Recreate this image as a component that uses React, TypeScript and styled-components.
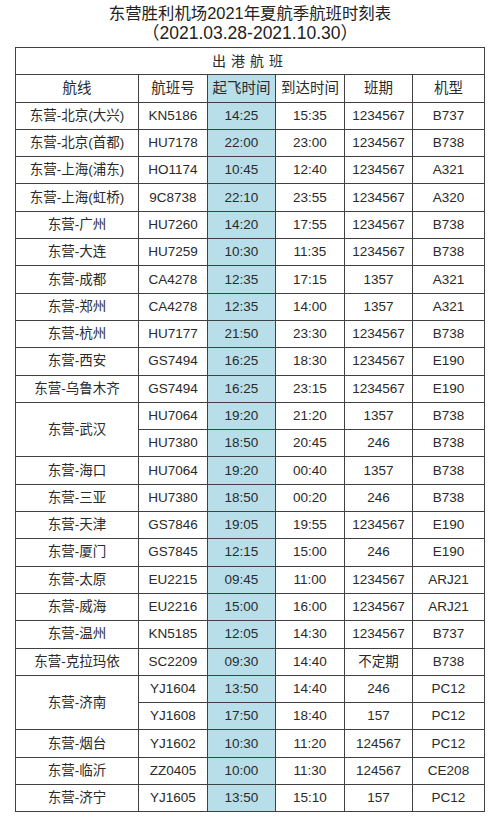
import React from 'react';
import styled, { createGlobalStyle } from 'styled-components';

const GlobalStyle = createGlobalStyle`
  html, body {
    margin: 0;
    padding: 0;
    background: #ffffff;
  }
  body {
    font-family: "Liberation Sans", "Noto Sans CJK SC", sans-serif;
    color: #2a2a2a;
  }
`;

const Page = styled.div`
  width: 500px;
  display: flex;
  flex-direction: column;
  align-items: center;
`;

const Heading = styled.div`
  height: 47px;
  padding-top: 3px;
  box-sizing: border-box;
  text-align: center;
  color: #222;
`;

const TitleLine = styled.div<{ size: number }>`
  font-size: ${p => p.size}px;
  line-height: 20px;
`;

const Table = styled.table`
  width: 469px;
  border-collapse: collapse;
  table-layout: fixed;
  border: 1.5px solid #404040;
`;

const Row = styled.tr`
  height: 27.3px;
`;

const Cell = styled.td<{ blue?: boolean }>`
  border: 1.3px solid #404040;
  padding: 0;
  text-align: center;
  vertical-align: middle;
  font-size: 13.5px;
  line-height: 16px;
  background: ${p => (p.blue ? '#b8dfe9' : '#ffffff')};
  white-space: nowrap;
`;

const Banner = styled(Cell)`
  letter-spacing: 5px;
  font-size: 14px;
`;

const HeadCell = styled(Cell)`
  font-size: 14.5px;
`;

type Flight = {
  route?: string;
  span?: number;
  no: string;
  dep: string;
  arr: string;
  days: string;
  type: string;
};

const flights: Flight[] = [
  { route: '东营-北京(大兴)', no: 'KN5186', dep: '14:25', arr: '15:35', days: '1234567', type: 'B737' },
  { route: '东营-北京(首都)', no: 'HU7178', dep: '22:00', arr: '23:00', days: '1234567', type: 'B738' },
  { route: '东营-上海(浦东)', no: 'HO1174', dep: '10:45', arr: '12:40', days: '1234567', type: 'A321' },
  { route: '东营-上海(虹桥)', no: '9C8738', dep: '22:10', arr: '23:55', days: '1234567', type: 'A320' },
  { route: '东营-广州', no: 'HU7260', dep: '14:20', arr: '17:55', days: '1234567', type: 'B738' },
  { route: '东营-大连', no: 'HU7259', dep: '10:30', arr: '11:35', days: '1234567', type: 'B738' },
  { route: '东营-成都', no: 'CA4278', dep: '12:35', arr: '17:15', days: '1357', type: 'A321' },
  { route: '东营-郑州', no: 'CA4278', dep: '12:35', arr: '14:00', days: '1357', type: 'A321' },
  { route: '东营-杭州', no: 'HU7177', dep: '21:50', arr: '23:30', days: '1234567', type: 'B738' },
  { route: '东营-西安', no: 'GS7494', dep: '16:25', arr: '18:30', days: '1234567', type: 'E190' },
  { route: '东营-乌鲁木齐', no: 'GS7494', dep: '16:25', arr: '23:15', days: '1234567', type: 'E190' },
  { route: '东营-武汉', span: 2, no: 'HU7064', dep: '19:20', arr: '21:20', days: '1357', type: 'B738' },
  { no: 'HU7380', dep: '18:50', arr: '20:45', days: '246', type: 'B738' },
  { route: '东营-海口', no: 'HU7064', dep: '19:20', arr: '00:40', days: '1357', type: 'B738' },
  { route: '东营-三亚', no: 'HU7380', dep: '18:50', arr: '00:20', days: '246', type: 'B738' },
  { route: '东营-天津', no: 'GS7846', dep: '19:05', arr: '19:55', days: '1234567', type: 'E190' },
  { route: '东营-厦门', no: 'GS7845', dep: '12:15', arr: '15:00', days: '246', type: 'E190' },
  { route: '东营-太原', no: 'EU2215', dep: '09:45', arr: '11:00', days: '1234567', type: 'ARJ21' },
  { route: '东营-威海', no: 'EU2216', dep: '15:00', arr: '16:00', days: '1234567', type: 'ARJ21' },
  { route: '东营-温州', no: 'KN5185', dep: '12:05', arr: '14:30', days: '1234567', type: 'B737' },
  { route: '东营-克拉玛依', no: 'SC2209', dep: '09:30', arr: '14:40', days: '不定期', type: 'B738' },
  { route: '东营-济南', span: 2, no: 'YJ1604', dep: '13:50', arr: '14:40', days: '246', type: 'PC12' },
  { no: 'YJ1608', dep: '17:50', arr: '18:40', days: '157', type: 'PC12' },
  { route: '东营-烟台', no: 'YJ1602', dep: '10:30', arr: '11:20', days: '124567', type: 'PC12' },
  { route: '东营-临沂', no: 'ZZ0405', dep: '10:00', arr: '11:30', days: '124567', type: 'CE208' },
  { route: '东营-济宁', no: 'YJ1605', dep: '13:50', arr: '15:10', days: '157', type: 'PC12' },
];

const columns = [123, 69, 68, 69, 68, 72];

export default function App() {
  return (
    <Page>
      <GlobalStyle />
      <Heading>
        <TitleLine size={16.4}>东营胜利机场2021年夏航季航班时刻表</TitleLine>
        <TitleLine size={17.5}>（2021.03.28-2021.10.30）</TitleLine>
      </Heading>
      <Table>
        <colgroup>
          {columns.map((w, i) => (
            <col key={i} style={{ width: w }} />
          ))}
        </colgroup>
        <tbody>
          <Row>
            <Banner colSpan={6}>出港航班</Banner>
          </Row>
          <Row>
            <HeadCell>航线</HeadCell>
            <HeadCell>航班号</HeadCell>
            <HeadCell blue>起飞时间</HeadCell>
            <HeadCell>到达时间</HeadCell>
            <HeadCell>班期</HeadCell>
            <HeadCell>机型</HeadCell>
          </Row>
          {flights.map((f, i) => (
            <Row key={i}>
              {f.route && <Cell rowSpan={f.span ?? 1}>{f.route}</Cell>}
              <Cell>{f.no}</Cell>
              <Cell blue>{f.dep}</Cell>
              <Cell>{f.arr}</Cell>
              <Cell>{f.days}</Cell>
              <Cell>{f.type}</Cell>
            </Row>
          ))}
        </tbody>
      </Table>
    </Page>
  );
}
